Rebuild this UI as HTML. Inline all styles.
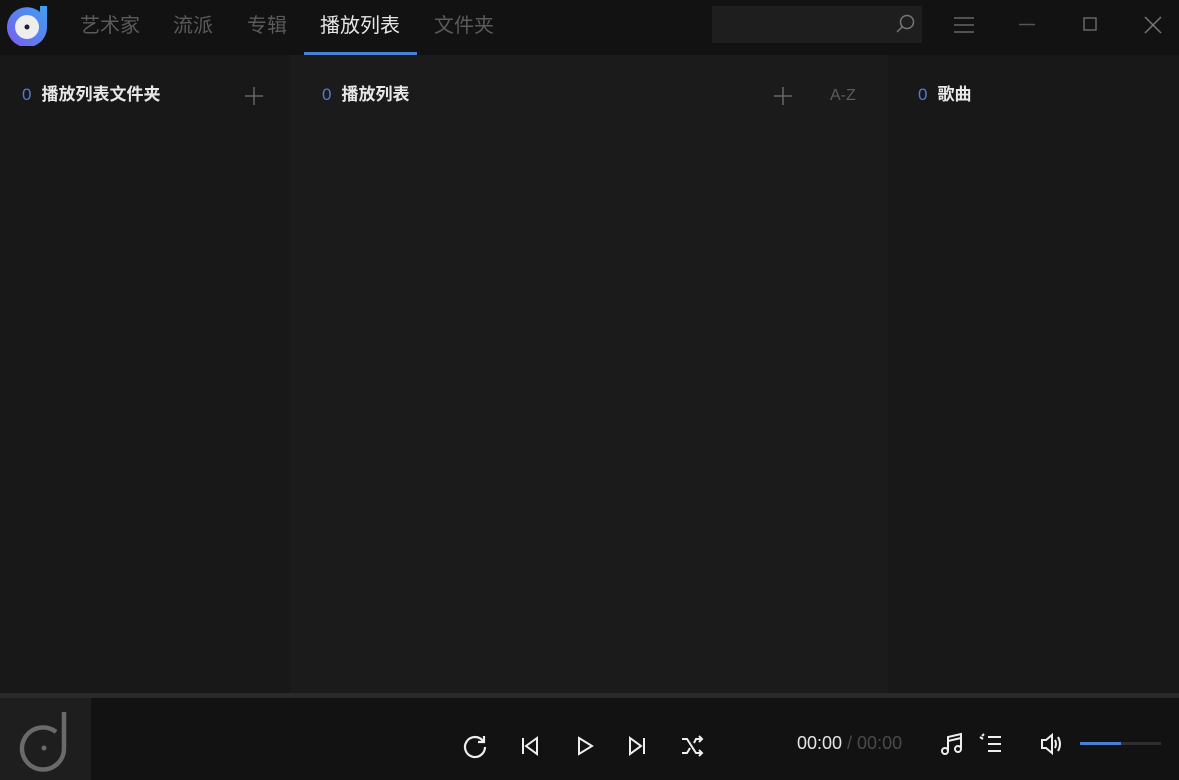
<!DOCTYPE html>
<html><head><meta charset="utf-8"><style>
*{margin:0;padding:0;box-sizing:border-box}
body{width:1179px;height:780px;background:#121212;overflow:hidden;position:relative;font-family:"Liberation Sans","Noto Sans CJK SC",sans-serif}
.abs{position:absolute}
.tab{position:absolute;top:9px;font-size:20px;color:#5a5a5a}
.hd{position:absolute;top:80px;font-size:17px;color:#e8e8e8;font-weight:bold}
.hd b{color:#4a7fd6;font-weight:normal;margin-right:10px}
svg{position:absolute}
</style></head><body>
<div class="abs" style="left:0;top:0;width:1179px;height:55px;background:#121212"></div>
<svg style="left:5px;top:4px" width="44" height="42" viewBox="0 0 44 42">
<defs><linearGradient id="g" x1="0" y1="1" x2="1" y2="0"><stop offset="0" stop-color="#7a5cf0"/><stop offset="1" stop-color="#3fa0f0"/></linearGradient></defs>
<path d="M35 2h7v21a20 20 0 1 1-7-15z" fill="url(#g)"/>
<circle cx="22" cy="23" r="12" fill="#eee"/><circle cx="22" cy="23" r="2.5" fill="#222"/>
</svg>
<div class="tab" style="left:80px">艺术家</div>
<div class="tab" style="left:173px">流派</div>
<div class="tab" style="left:247px">专辑</div>
<div class="tab" style="left:320px;color:#e6e6e6">播放列表</div>
<div class="tab" style="left:434px">文件夹</div>
<div class="abs" style="left:304px;top:52px;width:113px;height:3px;background:#4a7fd6"></div>
<div class="abs" style="left:712px;top:6px;width:210px;height:37px;background:#1e1e1e"></div>
<svg style="left:895px;top:13px" width="22" height="22" viewBox="0 0 22 22" fill="none" stroke="#777" stroke-width="1.5"><circle cx="12" cy="9" r="6.5"/><path d="M7.5 13.5L2 19"/></svg>
<svg style="left:953px;top:15px" width="22" height="20" viewBox="0 0 22 20" stroke="#666" stroke-width="1.5"><path d="M1 3h20M1 10h20M1 17h20"/></svg>
<svg style="left:1018px;top:20px" width="18" height="8" stroke="#555" stroke-width="1.5"><path d="M1 4.5h16"/></svg>
<svg style="left:1083px;top:17px" width="15" height="15" fill="none" stroke="#666" stroke-width="1.5"><rect x="1" y="1" width="12" height="12"/></svg>
<svg style="left:1144px;top:16px" width="18" height="18" stroke="#777" stroke-width="1.5"><path d="M1 1l16 16M17 1L1 17"/></svg>

<div class="abs" style="left:0;top:55px;width:290px;height:638px;background:#181818"></div>
<div class="abs" style="left:290px;top:55px;width:598px;height:638px;background:#1b1b1b"></div>
<div class="abs" style="left:888px;top:55px;width:291px;height:638px;background:#181818"></div>
<div class="hd" style="left:22px"><b>0</b>播放列表文件夹</div>
<div class="hd" style="left:322px"><b>0</b>播放列表</div>
<div class="hd" style="left:918px"><b>0</b>歌曲</div>
<svg style="left:244px;top:86px" width="20" height="20" stroke="#666" stroke-width="1.5"><path d="M10 1v18M1 10h18"/></svg>
<svg style="left:773px;top:86px" width="20" height="20" stroke="#666" stroke-width="1.5"><path d="M10 1v18M1 10h18"/></svg>
<div class="abs" style="left:830px;top:87px;font-size:16px;color:#5c5c5c">A-Z</div>

<div class="abs" style="left:0;top:693px;width:1179px;height:5px;background:#2a2a2a"></div>
<div class="abs" style="left:0;top:698px;width:91px;height:82px;background:#1e1e1e"></div>
<svg style="left:14px;top:710px" width="56" height="62" viewBox="0 0 56 62" fill="none" stroke="#6a6a6a" stroke-width="4.5"><path d="M50 2v36a21 21 0 1 1-8-16"/><circle cx="30" cy="38" r="2.5" fill="#6a6a6a" stroke="none"/></svg>
<svg style="left:462px;top:733px" width="26" height="26" viewBox="0 0 26 26" fill="none" stroke="#eee" stroke-width="2.2"><path d="M21 8A10 10 0 1 0 23 14"/><path d="M22 3v6h-6"/></svg>
<svg style="left:520px;top:736px" width="20" height="20" viewBox="0 0 20 20" fill="none" stroke="#eee" stroke-width="2"><path d="M3 2v16M17 2L6 10l11 8z"/></svg>
<svg style="left:575px;top:736px" width="20" height="20" viewBox="0 0 20 20" fill="none" stroke="#eee" stroke-width="2"><path d="M4 2l13 8-13 8z"/></svg>
<svg style="left:627px;top:736px" width="20" height="20" viewBox="0 0 20 20" fill="none" stroke="#eee" stroke-width="2"><path d="M17 2v16M3 2l11 8-11 8z"/></svg>
<svg style="left:681px;top:735px" width="24" height="22" viewBox="0 0 24 22" fill="none" stroke="#eee" stroke-width="2"><path d="M1 4h5l9 14h6M1 18h5l3-5M13 8l2-4h6M18 1l3 3-3 3M18 15l3 3-3 3"/></svg>
<div class="abs" style="left:797px;top:733px;font-size:18px;color:#e6e6e6">00:00 <span style="color:#4a4a4a">/ 00:00</span></div>
<svg style="left:940px;top:732px" width="24" height="24" viewBox="0 0 24 24" fill="none" stroke="#eee" stroke-width="2"><path d="M8 18V5l13-3v14M8 9l13-3"/><circle cx="5" cy="19" r="3"/><circle cx="18" cy="17" r="3"/></svg>
<svg style="left:979px;top:733px" width="24" height="22" viewBox="0 0 24 22" fill="none" stroke="#eee" stroke-width="2"><path d="M1 4l3 2M9 4h13M9 11h13M9 18h13M3 3l2-2"/></svg>
<svg style="left:1040px;top:733px" width="24" height="22" viewBox="0 0 24 22" fill="none" stroke="#eee" stroke-width="2"><path d="M2 7h4l6-5v18l-6-5H2z"/><path d="M15 7q2 4 0 8M18 4q4 7 0 14"/></svg>
<div class="abs" style="left:1080px;top:742px;width:81px;height:3px;background:#2e2e2e"></div>
<div class="abs" style="left:1080px;top:742px;width:41px;height:3px;background:#4a7fd6"></div>
</body></html>
